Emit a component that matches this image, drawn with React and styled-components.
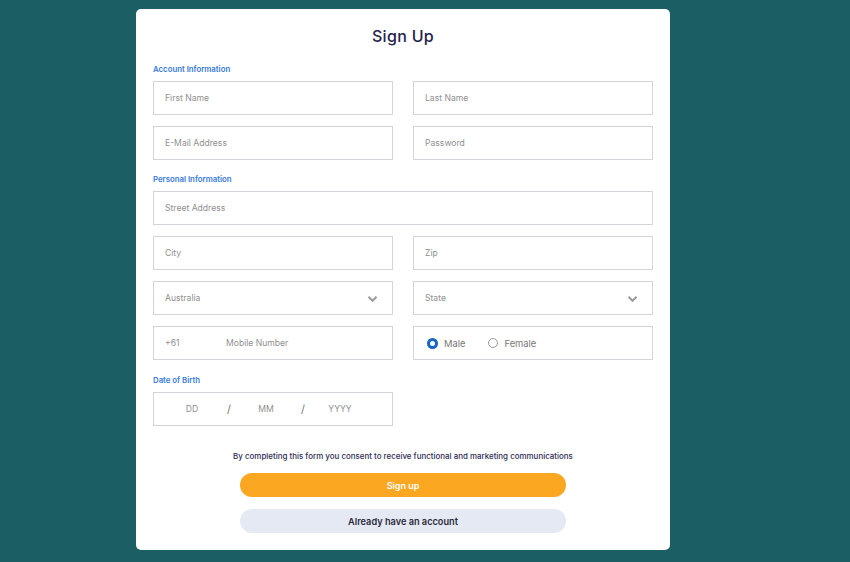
import React from "react";
import styled, { createGlobalStyle } from "styled-components";

const Global = createGlobalStyle`
  html, body { margin: 0; padding: 0; }
  body {
    background: #1b5e63;
    font-family: "Inter", "Liberation Sans", sans-serif;
    height: 562px;
    overflow: hidden;
  }
`;

const Page = styled.div`
  padding: 9px 0 0 136px;
`;

const Card = styled.form`
  width: 534px;
  height: 541px;
  box-sizing: border-box;
  background: #ffffff;
  border-radius: 5px;
  padding: 0 17px;
  display: flex;
  flex-direction: column;
`;

const Title = styled.h1`
  margin: 16px 0 0;
  height: 22px;
  line-height: 22px;
  text-align: center;
  font-size: 16px;
  font-weight: 500;
  color: #23224a;
  letter-spacing: 0.3px;
`;

const SectionLabel = styled.div`
  margin-top: ${(p) => p.$mt}px;
  height: 10px;
  line-height: 10px;
  font-size: 7.8px;
  font-weight: 600;
  color: #3679dc;
  margin-bottom: 7px;
`;

const Grid = styled.div`
  display: grid;
  grid-template-columns: 240px 240px;
  column-gap: 20px;
  row-gap: 11px;
`;

const Field = styled.div`
  grid-column: ${(p) => (p.$full ? "1 / span 2" : "auto")};
  height: 34px;
  box-sizing: border-box;
  border: 1px solid #d3d5d9;
  display: flex;
  align-items: center;
  padding: 0 11px;
  font-size: 8.6px;
  color: #8f8f8f;
  position: relative;
`;

const Chevron = styled.svg`
  position: absolute;
  right: 14px;
  top: 13px;
`;

const Prefix = styled.span`
  width: 61px;
`;

const RadioGroup = styled.div`
  display: flex;
  align-items: center;
  gap: 23px;
  padding-left: 2px;
  font-size: 9.4px;
  color: #777;
`;

const RadioOption = styled.label`
  display: flex;
  align-items: center;
  gap: 6px;
`;

const RadioDot = styled.span`
  width: ${(p) => (p.$on ? 11 : 10)}px;
  height: ${(p) => (p.$on ? 11 : 10)}px;
  box-sizing: border-box;
  border-radius: 50%;
  border: ${(p) => (p.$on ? "3.5px solid #1765c2" : "1px solid #9a9a9a")};
  background: #fff;
`;

const DateField = styled(Field)`
  width: 240px;
  padding: 0 0 0 8px;
`;

const DatePart = styled.span`
  width: 60px;
  text-align: center;
`;

const Slash = styled.span`
  width: 14px;
  text-align: center;
  font-size: 11px;
  color: #777;
`;

const Consent = styled.p`
  margin: 25px 0 0;
  text-align: center;
  font-size: 7.95px;
  font-weight: 500;
  color: #2d2b55;
  line-height: 10px;
  white-space: nowrap;
`;

const Button = styled.button`
  align-self: center;
  width: 326px;
  height: 24px;
  border: none;
  border-radius: 12px;
  margin-top: ${(p) => p.$mt}px;
  background: ${(p) => (p.$primary ? "#fba722" : "#e5e9f3")};
  color: ${(p) => (p.$primary ? "#ffffff" : "#2a2a3c")};
  font-family: inherit;
  font-size: ${(p) => (p.$primary ? 9 : 9.2)}px;
  font-weight: 600;
  cursor: pointer;
`;

const ChevronIcon = () => (
  <Chevron width="11" height="8" viewBox="0 0 11 8">
    <path d="M1.5 1.8 L5.5 5.8 L9.5 1.8" fill="none" stroke="#9b9b9b" strokeWidth="2" />
  </Chevron>
);

export default function App() {
  return (
    <Page>
      <Global />
      <Card onSubmit={(e) => e.preventDefault()}>
        <Title>Sign Up</Title>
        <SectionLabel $mt={17}>Account Information</SectionLabel>
        <Grid>
          <Field>First Name</Field>
          <Field>Last Name</Field>
          <Field>E-Mail Address</Field>
          <Field>Password</Field>
        </Grid>
        <SectionLabel $mt={14}>Personal Information</SectionLabel>
        <Grid>
          <Field $full>Street Address</Field>
          <Field>City</Field>
          <Field>Zip</Field>
          <Field>
            Australia
            <ChevronIcon />
          </Field>
          <Field>
            State
            <ChevronIcon />
          </Field>
          <Field>
            <Prefix>+61</Prefix>
            Mobile Number
          </Field>
          <Field>
            <RadioGroup>
              <RadioOption>
                <RadioDot $on />
                Male
              </RadioOption>
              <RadioOption>
                <RadioDot />
                Female
              </RadioOption>
            </RadioGroup>
          </Field>
        </Grid>
        <SectionLabel $mt={15}>Date of Birth</SectionLabel>
        <DateField>
          <DatePart>DD</DatePart>
          <Slash>/</Slash>
          <DatePart>MM</DatePart>
          <Slash>/</Slash>
          <DatePart>YYYY</DatePart>
        </DateField>
        <Consent>By completing this form you consent to receive functional and marketing communications</Consent>
        <Button type="submit" $primary $mt={12}>Sign up</Button>
        <Button type="button" $mt={12}>Already have an account</Button>
      </Card>
    </Page>
  );
}
